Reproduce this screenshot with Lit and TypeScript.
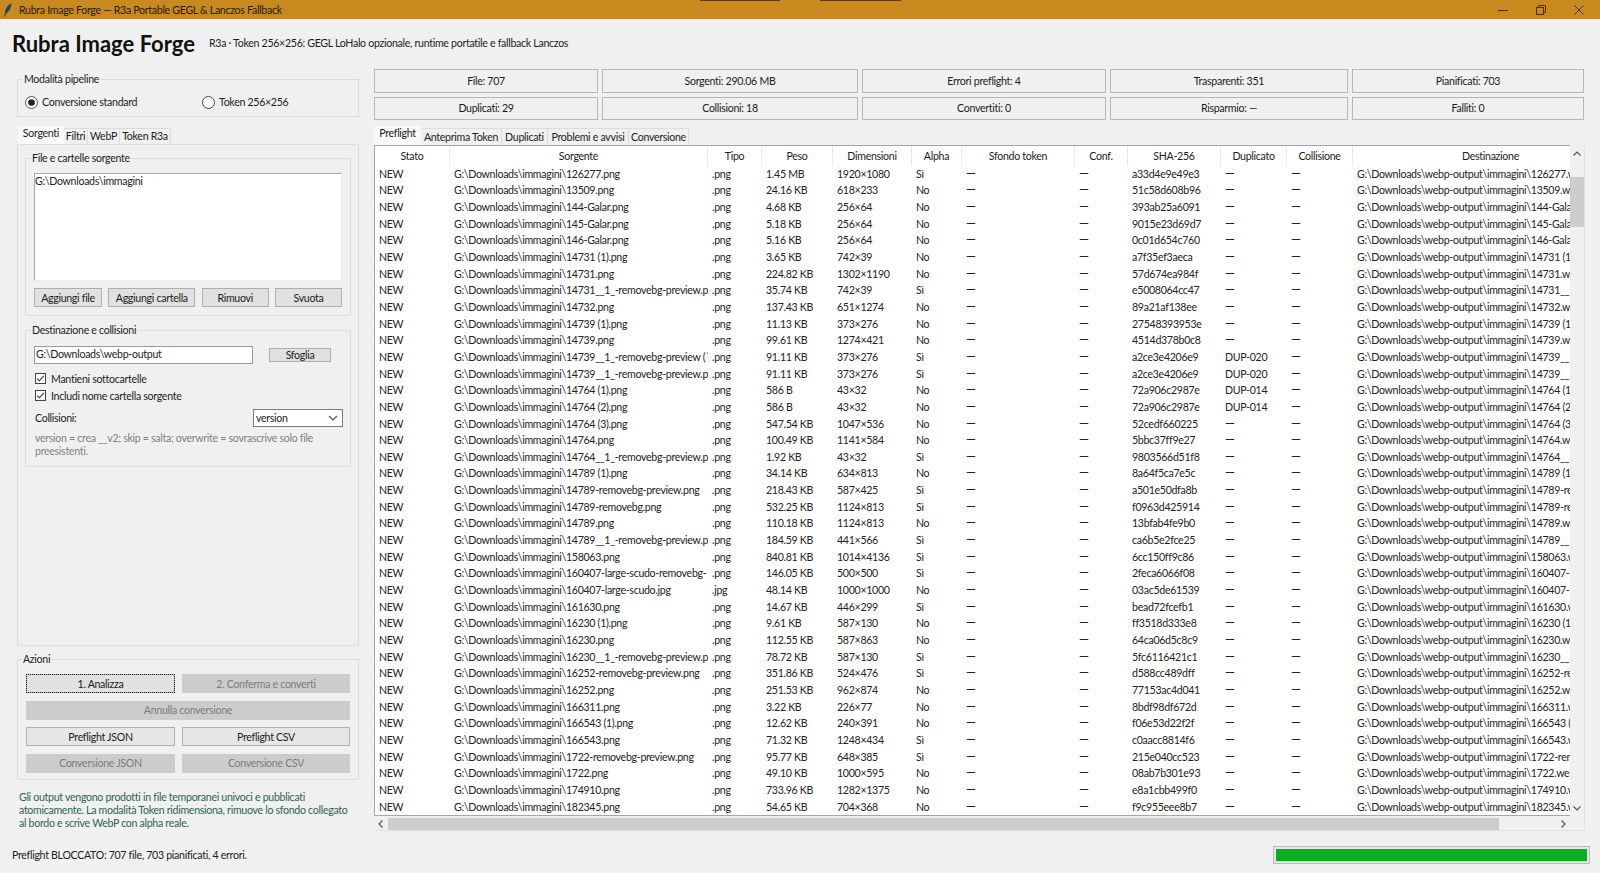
import { LitElement, html, css, svg } from "lit";
import { customElement } from "lit/decorators.js";

const RAW = `126277.png|.png|1.45 MB|1920×1080|Sì|a33d4e9e49e3||126277.webp
13509.png|.png|24.16 KB|618×233|No|51c58d608b96||13509.webp
144-Galar.png|.png|4.68 KB|256×64|No|393ab25a6091||144-Galar.webp
145-Galar.png|.png|5.18 KB|256×64|No|9015e23d69d7||145-Galar.webp
146-Galar.png|.png|5.16 KB|256×64|No|0c01d654c760||146-Galar.webp
14731 (1).png|.png|3.65 KB|742×39|No|a7f35ef3aeca||14731 (1).webp
14731.png|.png|224.82 KB|1302×1190|No|57d674ea984f||14731.webp
14731__1_-removebg-preview.p|.png|35.74 KB|742×39|Sì|e5008064cc47||14731__1_-removebg-preview.webp
14732.png|.png|137.43 KB|651×1274|No|89a21af138ee||14732.webp
14739 (1).png|.png|11.13 KB|373×276|No|27548393953e||14739 (1).webp
14739.png|.png|99.61 KB|1274×421|No|4514d378b0c8||14739.webp
14739__1_-removebg-preview (´|.png|91.11 KB|373×276|Sì|a2ce3e4206e9|DUP-020|14739__1_-removebg-preview (1).webp
14739__1_-removebg-preview.p|.png|91.11 KB|373×276|Sì|a2ce3e4206e9|DUP-020|14739__1_-removebg-preview.webp
14764 (1).png|.png|586 B|43×32|No|72a906c2987e|DUP-014|14764 (1).webp
14764 (2).png|.png|586 B|43×32|No|72a906c2987e|DUP-014|14764 (2).webp
14764 (3).png|.png|547.54 KB|1047×536|No|52cedf660225||14764 (3).webp
14764.png|.png|100.49 KB|1141×584|No|5bbc37ff9e27||14764.webp
14764__1_-removebg-preview.p|.png|1.92 KB|43×32|Sì|9803566d51f8||14764__1_-removebg-preview.webp
14789 (1).png|.png|34.14 KB|634×813|No|8a64f5ca7e5c||14789 (1).webp
14789-removebg-preview.png|.png|218.43 KB|587×425|Sì|a501e50dfa8b||14789-removebg-preview.webp
14789-removebg.png|.png|532.25 KB|1124×813|Sì|f0963d425914||14789-removebg.webp
14789.png|.png|110.18 KB|1124×813|No|13bfab4fe9b0||14789.webp
14789__1_-removebg-preview.p|.png|184.59 KB|441×566|Sì|ca6b5e2fce25||14789__1_-removebg-preview.webp
158063.png|.png|840.81 KB|1014×4136|Sì|6cc150ff9c86||158063.webp
160407-large-scudo-removebg-|.png|146.05 KB|500×500|Sì|2feca6066f08||160407-large-scudo-removebg-preview.webp
160407-large-scudo.jpg|.jpg|48.14 KB|1000×1000|No|03ac5de61539||160407-large-scudo.webp
161630.png|.png|14.67 KB|446×299|Sì|bead72fcefb1||161630.webp
16230 (1).png|.png|9.61 KB|587×130|No|ff3518d333e8||16230 (1).webp
16230.png|.png|112.55 KB|587×863|No|64ca06d5c8c9||16230.webp
16230__1_-removebg-preview.p|.png|78.72 KB|587×130|Sì|5fc6116421c1||16230__1_-removebg-preview.webp
16252-removebg-preview.png|.png|351.86 KB|524×476|Sì|d588cc489dff||16252-removebg-preview.webp
16252.png|.png|251.53 KB|962×874|No|77153ac4d041||16252.webp
166311.png|.png|3.22 KB|226×77|No|8bdf98df672d||166311.webp
166543 (1).png|.png|12.62 KB|240×391|No|f06e53d22f2f||166543 (1).webp
166543.png|.png|71.32 KB|1248×434|Sì|c0aacc8814f6||166543.webp
1722-removebg-preview.png|.png|95.77 KB|648×385|Sì|215e040cc523||1722-removebg-preview.webp
1722.png|.png|49.10 KB|1000×595|No|08ab7b301e93||1722.webp
174910.png|.png|733.96 KB|1282×1375|No|e8a1cbb499f0||174910.webp
182345.png|.png|54.65 KB|704×368|No|f9c955eee8b7||182345.webp`;

const ROWS = RAW.split("\n").map((l) => l.split("|"));
const HEAD = ["Stato", "Sorgente", "Tipo", "Peso", "Dimensioni", "Alpha", "Sfondo token", "Conf.", "SHA-256", "Duplicato", "Collisione", "Destinazione"];
const STATS = ["File: 707", "Sorgenti: 290.06 MB", "Errori preflight: 4", "Trasparenti: 351", "Pianificati: 703", "Duplicati: 29", "Collisioni: 18", "Convertiti: 0", "Risparmio: —", "Falliti: 0"];

const chevron = (d: string) => html`<svg class="arr" width="10" height="10" viewBox="0 0 10 10"><path d=${d} fill="none" stroke="#555" stroke-width="1.2"/></svg>`;
const check = html`<svg class="chk" width="11" height="11" viewBox="0 0 11 11"><rect x=".5" y=".5" width="10" height="10" fill="#fff" stroke="#444"/><path d="M2.2 5.6 4.4 7.8 8.8 2.8" fill="none" stroke="#333" stroke-width="1.1"/></svg>`;
const radio = (on: boolean) => html`<svg class="rad" width="13" height="13" viewBox="0 0 13 13"><circle cx="6.5" cy="6.5" r="6" fill="#fff" stroke="${on ? "#555" : "#444"}"/>${on ? svg`<circle cx="6.5" cy="6.5" r="3.3" fill="#222"/>` : ""}</svg>`;

@customElement("app-root")
export class AppRoot extends LitElement {
  static styles = css`
    :host { display: block; width: 1600px; height: 873px; overflow: hidden; background: #f0f0f0; position: relative;
      font-family: Lato, "Open Sans", sans-serif; font-size: 10.6px; letter-spacing: -0.3px; color: #1c1c1c; }
    * { box-sizing: border-box; }
    .titlebar { height: 19px; background: #c8891f; display: flex; align-items: center; padding-left: 4px; color: #2a1c06; }
    .titlebar .t { margin-left: 7px; }
    .feather { flex: none; }
    .wc { margin-left: auto; display: flex; }
    .wc div { width: 38px; height: 19px; display: flex; align-items: center; justify-content: center; }
    .wc { padding-right: 2px; }
    .mark { position: absolute; top: 0; height: 1px; background: #5a3a10; }
    .m1 { left: 700px; width: 80px; }
    .m2 { left: 820px; width: 81px; }
    .header { height: 50px; display: flex; align-items: center; padding: 0 0 0 12px; }
    .brand { font-size: 22px; font-weight: 700; letter-spacing: 0; color: #111; width: 197px; white-space: nowrap; line-height: 50px; }
    .sub { margin-top: -3px; white-space: nowrap; }
    .body { height: 761px; display: flex; }
    .left { width: 342px; margin-left: 17px; padding-top: 10px; display: flex; flex-direction: column; }
    .right { width: 1211px; margin-left: 15px; }
    .frame { border: 1px solid #dcdcdc; }
    .legend { width: fit-content; margin: -9px 0 0 5px; background: #f0f0f0; padding: 0 1px; height: 16px; line-height: 17px; white-space: nowrap; }
    .files .legend, .dest .legend { margin-left: -3px; }
    .actions .legend { margin-left: -4px; }
    .mode { height: 38px; }
    .radios { display: flex; align-items: center; margin-top: 8px; height: 14px; padding-left: 7px; }
    .rl { display: flex; align-items: center; gap: 4px; width: 177px; flex: none; }
    .rad, .chk { flex: none; }
    .tabs { display: flex; height: 18px; margin-top: 9px; align-items: flex-end; }
    .tab { height: 16px; line-height: 15px; background: #f0f0f0; border: 1px solid #dcdcdc; border-bottom: 0; border-left: 0; text-align: center; white-space: nowrap; }
    .tab.on { height: 18px; line-height: 15px; background: #f9f9f9; border: 0; }
    .l1 { width: 46px; margin-left: 1px; } .l2 { width: 24px; } .l3 { width: 32px; } .l4 { width: 51px; }
    .panel { flex: 1; border: 1px solid #dcdcdc; padding: 13px 7px 0 7px; }
    .files { height: 158px; padding: 0 8px; }
    .textarea { height: 108px; margin-top: 7px; background: #fff; border: 1px solid #a8a8a8; border-right-color: #eee; border-bottom-color: #eee; padding: 1px 0 0 0; }
    .btn { background: #e1e1e1; border: 1px solid #adadad; text-align: center; display: flex; align-items: center; justify-content: center; white-space: nowrap; }
    .filebtns { display: grid; grid-template-columns: 68px 87px 67px 67px; column-gap: 6.33px; height: 19px; margin-top: 7px; }
    .dest { height: 137px; margin-top: 14px; padding: 0 8px; }
    .destrow { display: grid; grid-template-columns: 219px 62px; column-gap: 16px; margin-top: 7px; align-items: center; height: 19px; }
    .entry { height: 18px; background: #fff; border: 1px solid #9a9a9a; padding-left: 1px; line-height: 15px; }
    .cb { display: flex; align-items: center; gap: 5px; height: 17px; padding-left: 1px; }
    .cb1 { margin-top: 6px; }
    .coll { display: flex; justify-content: space-between; align-items: center; height: 18px; margin-top: 5px; padding-left: 1px; margin-right: -1px; }
    .combo { width: 90px; height: 18px; background: #fff; border: 1px solid #7a7a7a; display: flex; align-items: center; justify-content: space-between; padding: 0 4px 0 2px; }
    .help { color: #7f7f7f; padding-left: 1px; margin-top: 5px; line-height: 12.6px; }
    .actions { height: 121px; margin-top: 13px; padding: 0 8px; }
    .agrid { display: grid; grid-template-columns: 149px 168px; column-gap: 7px; grid-auto-rows: 19px; row-gap: 7.5px; margin-top: 7px; }
    .off { background: #cccccc; border-color: #cccccc; color: #7c7c7c; }
    .focus { outline: 1px dotted #222; outline-offset: -1px; }
    .span { grid-column: 1 / 3; }
    .out { background: #e6e6e6; border-color: #b0b0b0; }
    .note { margin-top: 11px; padding-left: 2px; color: #2f6350; line-height: 12.9px; white-space: nowrap; }
    .stats { display: grid; grid-template-columns: 224px 256px 244px 238px 232px; gap: 4px; grid-auto-rows: 23.5px; }
    .stat { border: 1px solid #b8b8b8; background: #f0f0f0; display: flex; align-items: center; justify-content: center; white-space: nowrap; }
    .rtabs { display: flex; height: 19px; margin-top: 6px; align-items: flex-end; }
    .rtabs .tab { height: 17px; line-height: 16px; }
    .rtabs .tab.on { height: 19px; line-height: 15px; }
    .r1 { width: 47px; } .r2 { width: 81px; } .r3 { width: 46px; } .r4 { width: 81px; } .r5 { width: 60px; }
    .nb { height: 686px; width: 1211px; border: 1px solid #e2e2e2; border-left: 0; border-top: 0; }
    .tw { display: flex; height: 671px; }
    .tbl { width: 1196px; height: 671px; background: #fff; border: 1px solid #a6a6a6; border-right: 0; overflow: hidden;
      display: grid; grid-template-columns: 75px 258px 54px 71px 79px 50px 113px 53px 93px 66px 66px 276px; grid-template-rows: 19.67px; grid-auto-rows: 16.667px; }
    .th { text-align: center; line-height: 20px; border-right: 1px solid #eaeaea; white-space: nowrap; overflow: hidden; }
    .td { padding-left: 4px; line-height: 16.667px; white-space: nowrap; overflow: hidden; color: #222; }
    .dash { font-size: 12.5px; letter-spacing: 0; }
    .vs { width: 14px; height: 671px; display: flex; flex-direction: column; align-items: center; }
    .vs .up, .vs .dn { height: 16px; display: flex; align-items: center; justify-content: center; flex: none; }
    .vs .up { margin-top: 1px; }
    .vs .dn { margin-top: auto; margin-bottom: 0; }
    .vt { width: 14px; height: 50px; background: #cdcdcd; margin-top: 15px; }
    .hs { display: flex; width: 1196px; height: 14px; align-items: center; margin-top: 1px; }
    .hs .a { width: 14px; height: 12px; display: flex; align-items: center; justify-content: center; flex: none; }
    .ht { width: 1111px; height: 12px; background: #cdcdcd; flex: none; }
    .hs .e { margin-left: auto; }
    .status { height: 43px; display: flex; align-items: center; padding: 7px 10px 0 12px; justify-content: space-between; }
    .prog { width: 317px; height: 18px; border: 1px solid #bcbcbc; background: #e6e6e6; padding: 2px; }
    .fill { height: 100%; background: #06b025; }
  `;

  render() {
    return html`
      <div class="titlebar">
        <svg class="feather" width="8" height="14" viewBox="0 0 8 14"><path d="M7.5.5C4 1.5 1.5 5 1 9.5l.6 1.2C5 9 7 5 7.5.5Z" fill="#27405f"/><path d="M1.5 10 .8 13.5" stroke="#27405f" stroke-width="1" fill="none"/></svg>
        <span class="t">Rubra Image Forge — R3a Portable GEGL &amp; Lanczos Fallback</span>
        <div class="wc">
          <div><svg width="10" height="10" viewBox="0 0 10 10"><path d="M0 5.5h10" stroke="#4a2f08" stroke-width="1"/></svg></div>
          <div><svg width="10" height="10" viewBox="0 0 10 10"><path d="M2.5 2.5V.5h7v7h-2" fill="none" stroke="#4a2f08"/><rect x=".5" y="2.5" width="7" height="7" fill="none" stroke="#4a2f08"/></svg></div>
          <div><svg width="10" height="10" viewBox="0 0 10 10"><path d="M.5.5l9 9M9.5.5l-9 9" stroke="#4a2f08" stroke-width="1"/></svg></div>
        </div>
      </div>
      <div class="mark m1"></div><div class="mark m2"></div>
      <div class="header">
        <div class="brand">Rubra Image Forge</div>
        <div class="sub">R3a · Token 256×256: GEGL LoHalo opzionale, runtime portatile e fallback Lanczos</div>
      </div>
      <div class="body">
        <div class="left">
          <div class="frame mode">
            <div class="legend">Modalità pipeline</div>
            <div class="radios">
              <div class="rl">${radio(true)}<span>Conversione standard</span></div>
              <div class="rl">${radio(false)}<span>Token 256×256</span></div>
            </div>
          </div>
          <div class="tabs">
            <div class="tab on l1">Sorgenti</div><div class="tab l2">Filtri</div><div class="tab l3">WebP</div><div class="tab l4">Token R3a</div>
          </div>
          <div class="panel">
            <div class="frame files">
              <div class="legend">File e cartelle sorgente</div>
              <div class="textarea">G:\\Downloads\\immagini</div>
              <div class="filebtns">
                <div class="btn">Aggiungi file</div><div class="btn">Aggiungi cartella</div><div class="btn">Rimuovi</div><div class="btn">Svuota</div>
              </div>
            </div>
            <div class="frame dest">
              <div class="legend">Destinazione e collisioni</div>
              <div class="destrow"><div class="entry">G:\\Downloads\\webp-output</div><div class="btn">Sfoglia</div></div>
              <div class="cb cb1">${check}<span>Mantieni sottocartelle</span></div>
              <div class="cb">${check}<span>Includi nome cartella sorgente</span></div>
              <div class="coll"><span>Collisioni:</span><div class="combo"><span>version</span>${chevron("M1 3l4 4 4-4")}</div></div>
              <div class="help">version = crea __v2; skip = salta; overwrite = sovrascrive solo file preesistenti.</div>
            </div>
          </div>
          <div class="frame actions">
            <div class="legend">Azioni</div>
            <div class="agrid">
              <div class="btn focus">1. Analizza</div><div class="btn off">2. Conferma e converti</div>
              <div class="btn off span">Annulla conversione</div>
              <div class="btn out">Preflight JSON</div><div class="btn out">Preflight CSV</div>
              <div class="btn off">Conversione JSON</div><div class="btn off">Conversione CSV</div>
            </div>
          </div>
          <div class="note">Gli output vengono prodotti in file temporanei univoci e pubblicati<br>atomicamente. La modalità Token ridimensiona, rimuove lo sfondo collegato<br>al bordo e scrive WebP con alpha reale.</div>
        </div>
        <div class="right">
          <div class="stats">${STATS.map((s) => html`<div class="stat">${s}</div>`)}</div>
          <div class="rtabs">
            <div class="tab on r1">Preflight</div><div class="tab r2">Anteprima Token</div><div class="tab r3">Duplicati</div><div class="tab r4">Problemi e avvisi</div><div class="tab r5">Conversione</div>
          </div>
          <div class="nb">
            <div class="tw">
              <div class="tbl">
                ${HEAD.map((h) => html`<div class="th">${h}</div>`)}
                ${ROWS.map((r) => html`
                  <div class="td">NEW</div>
                  <div class="td">G:\\Downloads\\immagini\\${r[0]}</div>
                  <div class="td">${r[1]}</div>
                  <div class="td">${r[2]}</div>
                  <div class="td">${r[3]}</div>
                  <div class="td">${r[4]}</div>
                  <div class="td dash">—</div>
                  <div class="td dash">—</div>
                  <div class="td">${r[5]}</div>
                  ${r[6] ? html`<div class="td">${r[6]}</div>` : html`<div class="td dash">—</div>`}
                  <div class="td dash">—</div>
                  <div class="td">G:\\Downloads\\webp-output\\immagini\\${r[7]}</div>`)}
              </div>
              <div class="vs">
                <div class="up">${chevron("M1.5 6.5 5 3l3.5 3.5")}</div>
                <div class="vt"></div>
                <div class="dn">${chevron("M1.5 3.5 5 7l3.5-3.5")}</div>
              </div>
            </div>
            <div class="hs">
              <div class="a">${chevron("M6.5 1.5 3 5l3.5 3.5")}</div>
              <div class="ht"></div>
              <div class="a e">${chevron("M3.5 1.5 7 5 3.5 8.5")}</div>
            </div>
          </div>
        </div>
      </div>
      <div class="status">
        <span>Preflight BLOCCATO: 707 file, 703 pianificati, 4 errori.</span>
        <div class="prog"><div class="fill"></div></div>
      </div>
    `;
  }
}
